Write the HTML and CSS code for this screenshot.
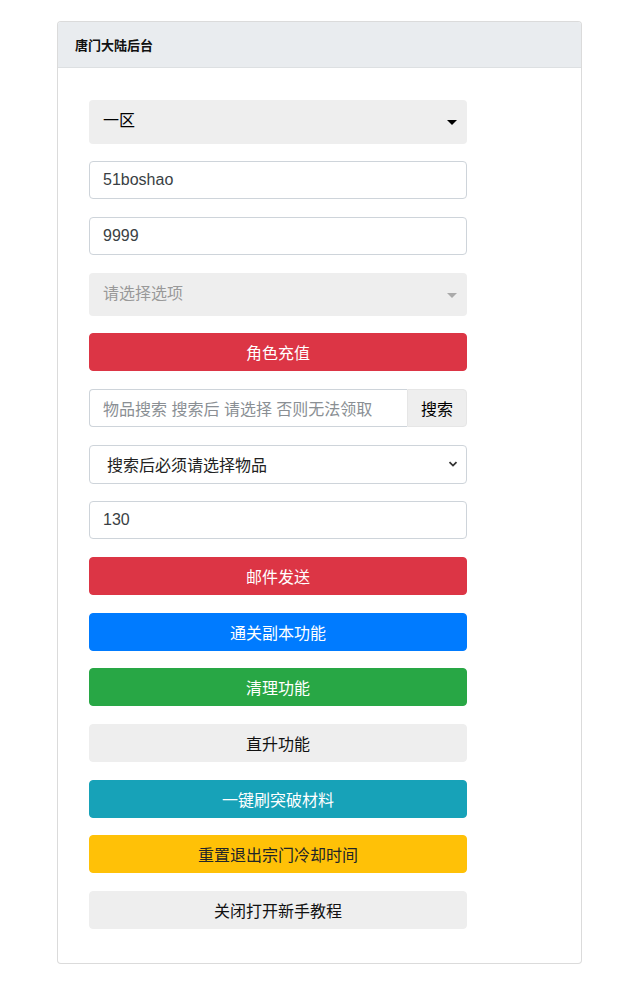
FILE: index.html
```html
<!DOCTYPE html>
<html lang="zh-CN">
<head>
<meta charset="utf-8">
<title>唐门大陆后台</title>
<link rel="stylesheet" href="styles.css">
</head>
<body>
<div class="card">
  <div class="card-header">唐门大陆后台</div>
  <div class="card-body">
    <div class="fake-select">
      <span>一区</span>
      <span class="caret"></span>
    </div>
    <div class="field"><span class="value">51boshao</span></div>
    <div class="field"><span class="value">9999</span></div>
    <div class="fake-select disabled">
      <span>请选择选项</span>
      <span class="caret"></span>
    </div>
    <button class="btn btn-red">角色充值</button>
    <div class="input-group">
      <div class="field grow"><span class="placeholder">物品搜索 搜索后 请选择 否则无法领取</span></div>
      <button class="addon">搜索</button>
    </div>
    <div class="field native-select">
      <span class="value dark">搜索后必须请选择物品</span>
      <svg class="chev" width="10" height="8" viewBox="0 0 10 8"><path d="M1.5 2.2 L5 5.6 L8.5 2.2" fill="none" stroke="#333" stroke-width="1.8"/></svg>
    </div>
    <div class="field"><span class="value">130</span></div>
    <button class="btn btn-red">邮件发送</button>
    <button class="btn btn-blue">通关副本功能</button>
    <button class="btn btn-green">清理功能</button>
    <button class="btn btn-gray">直升功能</button>
    <button class="btn btn-teal">一键刷突破材料</button>
    <button class="btn btn-yellow">重置退出宗门冷却时间</button>
    <button class="btn btn-gray">关闭打开新手教程</button>
  </div>
</div>
</body>
</html>
```
FILE: styles.css
```css
* { box-sizing: border-box; }
body {
  margin: 0;
  background: #fff;
  font-family: "Liberation Sans", "Noto Sans CJK SC", sans-serif;
  color: #212529;
}
.card {
  margin: 21px 0 0 57px;
  width: 525px;
  border: 1px solid rgba(0,0,0,.14);
  border-radius: 4px;
  background: #fff;
}
.card-header {
  height: 46px;
  padding: 0 17px;
  display: flex;
  align-items: center;
  background: #e9ecef;
  border-bottom: 1px solid rgba(0,0,0,.05);
  font-size: 13px;
  font-weight: bold;
  color: #111;
  border-radius: 3px 3px 0 0;
}
.card-body {
  padding: 32px 31px 16px 31px;
  display: flex;
  flex-direction: column;
  align-items: flex-start;
}
.card-body > * {
  width: 378px;
  margin-bottom: 17.7px;
}
.fake-select {
  height: 43.5px;
  background: #eee;
  border-radius: 4px;
  display: flex;
  align-items: center;
  justify-content: space-between;
  padding: 0 10px 0 14px;
  font-size: 16px;
  color: #000;
}
.fake-select > span:first-child { position: relative; top: -3px; }
.fake-select.disabled { height: 43px; color: #999; }
.fake-select.disabled > span:first-child { top: -2px; }
.caret {
  width: 0; height: 0;
  border-left: 5px solid transparent;
  border-right: 5px solid transparent;
  border-top: 5px solid #000;
  margin-top: 2px;
}
.disabled .caret { border-top-color: #aaa; }
.field {
  height: 38px;
  border: 1px solid #ced4da;
  border-radius: 4px;
  display: flex;
  align-items: center;
  padding: 0 13px;
  font-size: 16px;
  color: #495057;
  background: #fff;
}
.value { color: #3a3f44; }
.value.dark { color: #222; }
.placeholder { color: #8a8f94; white-space: nowrap; }
.input-group {
  display: flex;
  height: 38px;
}
.input-group .grow {
  flex: 1;
  border-radius: 4px 0 0 4px;
  border-right: none;
  overflow: hidden;
}
.addon {
  width: 60px;
  height: 38px;
  border: 1px solid #e6e6e6;
  border-radius: 0 4px 4px 0;
  background: #eee;
  font: inherit;
  font-size: 16px;
  color: #000;
  padding: 0;
}
.native-select {
  height: 39px;
  justify-content: space-between;
  padding: 0 8px 0 17px;
}
.btn {
  height: 38px;
  border: 1px solid transparent;
  border-radius: 4px;
  font-family: "Liberation Sans", "Noto Sans CJK SC", sans-serif;
  font-size: 16px;
  color: #fff;
  padding: 0;
  cursor: pointer;
}
.btn-red { background: #dc3545; border-color: #dc3545; }
.btn-blue { background: #007bff; border-color: #007bff; }
.btn-green { background: #28a745; border-color: #28a745; }
.btn-teal { background: #17a2b8; border-color: #17a2b8; }
.btn-yellow { background: #ffc107; border-color: #ffc107; color: #212529; }
.btn-gray { background: #eee; border-color: #eee; color: #111; }
```
